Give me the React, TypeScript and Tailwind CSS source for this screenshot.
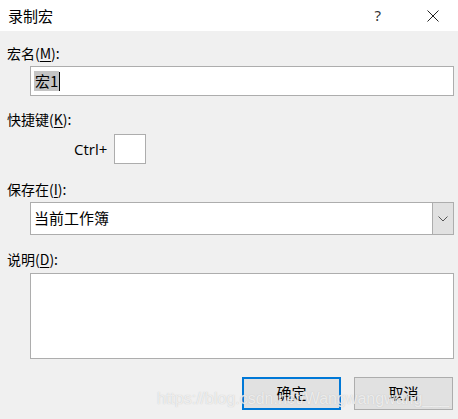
import React from "react";

const cjk = { fontFamily: '"Microsoft YaHei","Noto Sans CJK SC","Noto Sans",sans-serif' };

function Label({ text, k }: { text: string; k: string }) {
  return (
    <div className="h-[20px] text-[14px] leading-[20px] text-[#000]" style={cjk}>
      {text}(<span className="underline underline-offset-2">{k}</span>):
    </div>
  );
}

export default function App() {
  return (
    <div className="relative w-[458px] h-[419px] bg-[#f0f0f0] overflow-hidden" style={cjk}>
      <div className="h-[31px] bg-white flex items-center pl-[8px]">
        <span className="text-[15px] text-black leading-none">录制宏</span>
        <div className="ml-auto flex items-center">
          <span className="text-[15px] text-[#333] mr-[46px]" style={{ fontFamily: '"Noto Sans",sans-serif' }}>?</span>
          <svg width="12" height="12" viewBox="0 0 12 12" className="mr-[19px]">
            <path d="M0.5 0.5 L11.5 11.5 M11.5 0.5 L0.5 11.5" stroke="#222" strokeWidth="1" />
          </svg>
        </div>
      </div>
      <div className="px-[7px] pt-[12px]">
        <Label text="宏名" k="M" />
        <div className="mt-[3px] ml-[23px] mr-[-3px] h-[30px] bg-white border border-[#adadad] flex items-center pl-[3px]">
          <span className="bg-[#c4c4c4] h-[20px] leading-[20px] text-[15px] px-[1px] text-black">宏1</span>
          <span className="w-[1px] h-[19px] bg-black" />
        </div>
        <div className="mt-[13px]">
          <Label text="快捷键" k="K" />
        </div>
        <div className="mt-[5px] flex items-center pl-[67px]">
          <span className="text-[15px] text-black mr-[7px]" style={{ fontFamily: '"Open Sans","Noto Sans",sans-serif' }}>Ctrl+</span>
          <div className="w-[32px] h-[30px] bg-white border border-[#adadad]" />
        </div>
        <div className="mt-[15px]">
          <Label text="保存在" k="I" />
        </div>
        <div className="mt-[3px] ml-[23px] mr-[-3px] h-[33px] bg-white border border-[#adadad] flex">
          <div className="flex-1 flex items-center pl-[3px] text-[15px] text-black">当前工作簿</div>
          <div className="w-[21px] bg-[#e1e1e1] border-l border-[#adadad] flex items-center justify-center">
            <svg width="10" height="6" viewBox="0 0 10 6">
              <path d="M0.5 0.5 L5 5 L9.5 0.5" fill="none" stroke="#555" strokeWidth="1" />
            </svg>
          </div>
        </div>
        <div className="mt-[14px]">
          <Label text="说明" k="D" />
        </div>
        <div className="mt-[4px] ml-[23px] mr-[-3px] h-[86px] bg-white border border-[#adadad]" />
        <div className="mt-[18px] flex justify-end gap-[13px] mr-[-2px]">
          <div className="w-[99px] h-[33px] bg-[#e1e1e1] border-2 border-[#0078d7] flex items-center justify-center text-[15px] text-black">确定</div>
          <div className="w-[99px] h-[33px] bg-[#e1e1e1] border border-[#adadad] flex items-center justify-center text-[15px] text-black">取消</div>
        </div>
      </div>
      <div
        className="absolute left-[157px] top-[391px] text-[16px] leading-none text-white/70 whitespace-nowrap pointer-events-none"
        style={{ fontFamily: '"Liberation Sans",Arial,sans-serif', textShadow: "0 0 1px rgba(170,170,170,0.7)" }}
      >
        https://blog.csdn.net/Wangwangwang___
      </div>
    </div>
  );
}
